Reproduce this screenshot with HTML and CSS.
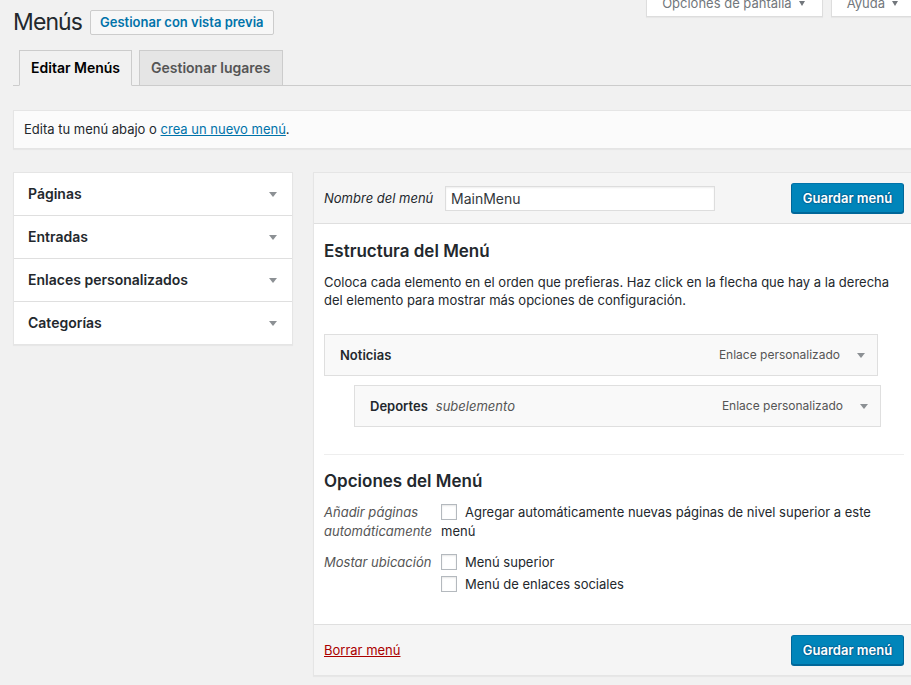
FILE: index.html
```html
<!DOCTYPE html>
<html lang="es">
<head>
<meta charset="utf-8">
<title>Menús</title>
<link rel="stylesheet" href="styles.css">
</head>
<body>
<div class="screen-meta-links">
  <button class="meta-tab">Opciones de pantalla <span class="caret"></span></button>
  <button class="meta-tab">Ayuda <span class="caret"></span></button>
</div>
<div class="wrap">
  <div class="title-row">
    <h1 class="page-title">Menús</h1>
    <a class="title-action" href="#">Gestionar con vista previa</a>
  </div>
  <nav class="nav-tabs">
    <a class="nav-tab active" href="#">Editar Menús</a>
    <a class="nav-tab" href="#">Gestionar lugares</a>
  </nav>
  <div class="manage-menus">Edita tu menú abajo o <a href="#">crea un nuevo menú</a>.</div>
  <div class="columns">
    <div class="accordion">
      <div class="acc-row"><span>Páginas</span><span class="caret caret-big"></span></div>
      <div class="acc-row"><span>Entradas</span><span class="caret caret-big"></span></div>
      <div class="acc-row"><span>Enlaces personalizados</span><span class="caret caret-big"></span></div>
      <div class="acc-row"><span>Categorías</span><span class="caret caret-big"></span></div>
    </div>
    <div class="menu-edit">
      <div class="edit-header">
        <label class="name-label" for="menu-name">Nombre del menú</label>
        <input class="name-input" id="menu-name" type="text" value="MainMenu">
        <button class="primary-btn">Guardar menú</button>
      </div>
      <div class="edit-body">
        <h3 class="section-title">Estructura del Menú</h3>
        <p class="desc">Coloca cada elemento en el orden que prefieras. Haz click en la flecha que hay a la derecha del elemento para mostrar más opciones de configuración.</p>
        <ul class="menu-items">
          <li class="menu-item item-top">
            <span class="item-title">Noticias</span>
            <span class="item-type">Enlace personalizado</span>
            <span class="caret caret-big"></span>
          </li>
          <li class="menu-item item-sub">
            <span class="item-title">Deportes</span>
            <span class="item-sub-label">subelemento</span>
            <span class="item-type">Enlace personalizado</span>
            <span class="caret caret-big"></span>
          </li>
        </ul>
        <hr class="divider">
        <h3 class="section-title">Opciones del Menú</h3>
        <div class="options">
          <div class="opt-label">Añadir páginas automáticamente</div>
          <div class="opt-field"><label><span class="checkbox"></span>Agregar automáticamente nuevas páginas de nivel superior a este menú</label></div>
          <div class="opt-label">Mostar ubicación</div>
          <div class="opt-field opt-list">
            <label><span class="checkbox"></span>Menú superior</label>
            <label><span class="checkbox"></span>Menú de enlaces sociales</label>
          </div>
        </div>
      </div>
      <div class="edit-footer">
        <a class="delete-link" href="#">Borrar menú</a>
        <button class="primary-btn">Guardar menú</button>
      </div>
    </div>
  </div>
</div>
</body>
</html>
```

FILE: styles.css
```css
* { box-sizing: border-box; }

html, body {
  margin: 0;
  padding: 0;
}

body {
  background: #f1f1f1;
  color: #444;
  font-family: Inter, "Liberation Sans", sans-serif;
  font-size: 13px;
  line-height: 1.4;
  overflow: hidden;
  height: 685px;
  position: relative;
}

a { color: #0073aa; }

/* screen meta tabs (hang from the top edge) */
.screen-meta-links {
  position: absolute;
  top: -13px;
  right: -5px;
  display: flex;
  gap: 8px;
}

.meta-tab {
  display: flex;
  align-items: center;
  gap: 7px;
  height: 30px;
  padding: 3px 17px 0 15px;
  background: #fff;
  border: 1px solid #ddd;
  border-top: 0;
  box-shadow: 0 1px 1px rgba(0,0,0,.04);
  font: 13px/22px Inter, "Liberation Sans", sans-serif;
  color: #72777c;
}

.caret {
  display: inline-block;
  flex: none;
  width: 0;
  height: 0;
  border-left: 3.5px solid transparent;
  border-right: 3.5px solid transparent;
  border-top: 5px solid #72777c;
}

.caret-big {
  border-left-width: 4px;
  border-right-width: 4px;
  border-top: 5px solid #8c9094;
}

.wrap {
  width: 915px;
  padding-left: 13px;
}

.title-row {
  display: flex;
  align-items: center;
  padding-top: 8px;
  height: 37px;
}

.page-title {
  margin: 0;
  font-size: 23px;
  font-weight: 400;
  line-height: 29px;
  letter-spacing: -0.9px;
  color: #23282d;
}

.title-action {
  margin-left: 8px;
  height: 25px;
  padding: 0 9px;
  border: 1px solid #ccc;
  border-radius: 2px;
  background: #f7f7f7;
  font-weight: 600;
  line-height: 23px;
  text-decoration: none;
  color: #0073aa;
}

.nav-tabs {
  display: flex;
  margin-top: 13px;
  border-bottom: 1px solid #ccc;
  height: 36px;
  padding-left: 6px;
}

.nav-tab {
  height: 36px;
  margin-right: 7px;
  padding: 5px 11px;
  border: 1px solid #ccc;
  background: #e5e5e5;
  color: #555;
  font-size: 14px;
  font-weight: 600;
  line-height: 24px;
  text-decoration: none;
}

.nav-tab.active {
  background: #f1f1f1;
  color: #000;
  border-bottom-color: #f1f1f1;
}

.manage-menus {
  margin-top: 24px;
  padding: 9px 10px;
  background: #fbfbfb;
  border: 1px solid #e5e5e5;
  box-shadow: 0 1px 1px rgba(0,0,0,.04);
  line-height: 19px;
  color: #23282d;
}

.columns {
  display: flex;
  align-items: flex-start;
  gap: 20px;
  margin-top: 23px;
}

.accordion {
  flex: 0 0 280px;
  background: #fff;
  border: 1px solid #e5e5e5;
  box-shadow: 0 1px 1px rgba(0,0,0,.04);
}

.acc-row {
  display: flex;
  align-items: center;
  justify-content: space-between;
  height: 43px;
  padding: 0 15px 0 14px;
  border-top: 1px solid #dfdfdf;
  font-size: 14px;
  font-weight: 600;
  color: #23282d;
}

.acc-row:first-child {
  border-top: 0;
  height: 42px;
}

.menu-edit {
  flex: 1;
  background: #fff;
  border: 1px solid #e5e5e5;
  box-shadow: 0 1px 1px rgba(0,0,0,.04);
}

.edit-header {
  display: flex;
  align-items: center;
  padding: 10px;
  background: #f5f5f5;
  border-bottom: 1px solid #dfdfdf;
}

.name-label {
  width: 121px;
  font-style: italic;
  color: #23282d;
}

.name-input {
  width: 270px;
  height: 25px;
  padding: 0 5px;
  border: 1px solid #ddd;
  box-shadow: inset 0 1px 2px rgba(0,0,0,.07);
  background: #fff;
  font: 14px Inter, "Liberation Sans", sans-serif;
  color: #32373c;
}

.primary-btn {
  margin-left: auto;
  width: 113px;
  height: 30px;
  padding: 0;
  background: #0085ba;
  border: 1px solid #0073aa;
  border-color: #0073aa #006799 #006799;
  border-radius: 3px;
  box-shadow: 0 1px 0 #006799;
  color: #fff;
  text-shadow: 0 -1px 1px #006799, 1px 0 1px #006799, 0 1px 1px #006799, -1px 0 1px #006799;
  font: 600 13px/28px Inter, "Liberation Sans", sans-serif;
}

.edit-body {
  padding: 15px 10px 29px;
}

.section-title {
  margin: 0;
  font-size: 17px;
  font-weight: 600;
  line-height: 24px;
  color: #23282d;
}

.desc {
  margin: 10px 0 0;
  line-height: 18px;
  color: #23282d;
}

.menu-items {
  list-style: none;
  margin: 25px 0 0;
  padding: 0;
}

.menu-item {
  display: flex;
  align-items: center;
  height: 42px;
  padding: 0 12px 0 15px;
  background: #f9f9f9;
  border: 1px solid #dfdfdf;
}

.item-top { width: 554px; }

.item-sub {
  width: 527px;
  margin: 9px 0 0 30px;
}

.item-title {
  font-weight: 600;
  color: #23282d;
}

.item-sub-label {
  margin-left: 8px;
  font-style: italic;
  color: #555;
}

.item-type {
  margin-left: auto;
  margin-right: 17px;
  font-size: 12px;
  color: #555;
}

.divider {
  margin: 27px 0 14px;
  border: 0;
  border-top: 1px solid #eee;
  height: 0;
}

.options {
  display: grid;
  grid-template-columns: 117px 1fr;
  row-gap: 12px;
  margin-top: 10px;
  line-height: 19px;
  color: #23282d;
}

.opt-label {
  font-style: italic;
  color: #555;
  padding-right: 4px;
}

.opt-field label {
  display: block;
  max-width: 462px;
}

.opt-list label {
  line-height: 22px;
}

.opt-list {
  margin-top: -2px;
}

.checkbox {
  display: inline-block;
  width: 16px;
  height: 16px;
  margin-right: 8px;
  vertical-align: -3px;
  background: #fff;
  border: 1px solid #b4b9be;
  box-shadow: inset 0 1px 2px rgba(0,0,0,.1);
}

.edit-footer {
  display: flex;
  align-items: center;
  padding: 10px;
  background: #f5f5f5;
  border-top: 1px solid #dfdfdf;
}

.delete-link {
  color: #a00;
  text-decoration: underline;
}
```
